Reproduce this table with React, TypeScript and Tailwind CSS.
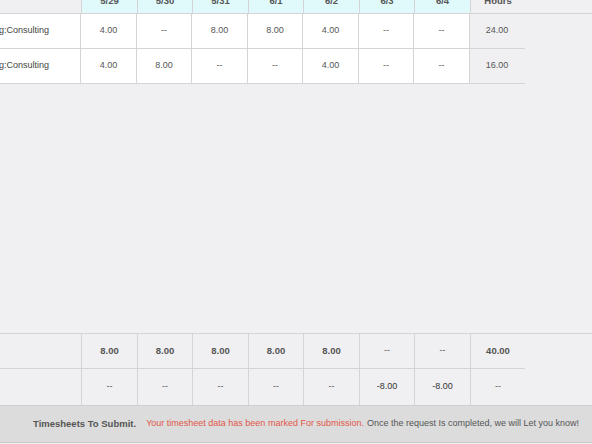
import React from "react";

const widths = [56, 55, 56, 55, 56, 55, 56, 55];
const headers = ["5/29", "5/30", "5/31", "6/1", "6/2", "6/3", "6/4"];

type Row = { label: string; vals: string[]; total: string };

const rows: Row[] = [
  { label: "g:Consulting", vals: ["4.00", "--", "8.00", "8.00", "4.00", "--", "--"], total: "24.00" },
  { label: "g:Consulting", vals: ["4.00", "8.00", "--", "--", "4.00", "--", "--"], total: "16.00" },
];

const totals = ["8.00", "8.00", "8.00", "8.00", "8.00", "--", "--"];
const diffs = ["--", "--", "--", "--", "--", "-8.00", "-8.00"];

function Cell({ w, children, className = "" }: { w: number; children?: React.ReactNode; className?: string }) {
  return (
    <div
      className={`flex justify-center border-l border-[#d4d4d6] shrink-0 h-full ${className}`}
      style={{ width: w }}
    >
      {children}
    </div>
  );
}

export default function App() {
  return (
    <div
      className="w-[592px] h-[444px] overflow-hidden bg-[#f0f0f2] flex flex-col text-[9px] text-[#555]"
      style={{ fontFamily: '"Liberation Sans", Arial, sans-serif' }}
    >
      {/* header */}
      <div className="-mt-[22px] h-[36px] shrink-0 flex border-b border-[#d4d4d6] w-[592px] font-bold text-[9.5px]">
        <div className="w-[81px] shrink-0 h-full" />
        {headers.map((h, i) => (
          <Cell key={h} w={widths[i]} className="bg-[#e0fafc] items-end pb-[7px] leading-[11px]">
            {h}
          </Cell>
        ))}
        <Cell w={widths[7]} className="items-end pb-[7px] leading-[11px]">Hours</Cell>
      </div>
      {rows.map((r, ri) => (
        <div key={ri} className="h-[35px] shrink-0 flex border-b border-[#d4d4d6] w-[525px]">
          <div className="w-[81px] shrink-0 h-full bg-white flex items-center text-[#444] -ml-px">{r.label}</div>
          {r.vals.map((v, i) => (
            <Cell key={i} w={widths[i]} className="bg-white items-center">
              {v}
            </Cell>
          ))}
          <Cell w={widths[7]} className="items-center">{r.total}</Cell>
        </div>
      ))}
      <div className="flex-1" />
      <div className="h-[36px] shrink-0 border-t border-[#d4d4d6] w-[592px]">
        <div className="h-full flex border-b border-[#d4d4d6] w-[525px] font-bold text-[9.5px]">
          <div className="w-[81px] shrink-0 h-full" />
          {totals.map((v, i) => (
            <Cell key={i} w={widths[i]} className={v === "--" ? "items-center font-normal text-[9px]" : "items-center"}>
              {v}
            </Cell>
          ))}
          <Cell w={widths[7]} className="items-center">40.00</Cell>
        </div>
      </div>
      <div className="h-[36px] shrink-0 flex w-[525px]">
        <div className="w-[81px] shrink-0 h-full" />
        {diffs.map((v, i) => (
          <Cell key={i} w={widths[i]} className={v !== "--" ? "items-center text-[#333]" : "items-center"}>
            {v}
          </Cell>
        ))}
        <Cell w={widths[7]} className="items-center">--</Cell>
      </div>
      <div className="h-[38px] shrink-0 bg-[#dcdcdc] border-t border-[#d0d0d0] border-b border-b-[#c9c9c9] flex items-center pl-[33px] mb-px">
        <span className="font-bold text-[9.5px] text-[#555]">Timesheets To Submit.</span>
        <span className="ml-[10px] text-[#e0574a]">Your timesheet data has been marked For submission.</span>
        <span className="ml-[3px] text-[#555]">Once the request Is completed, we will Let you know!</span>
      </div>
    </div>
  );
}
